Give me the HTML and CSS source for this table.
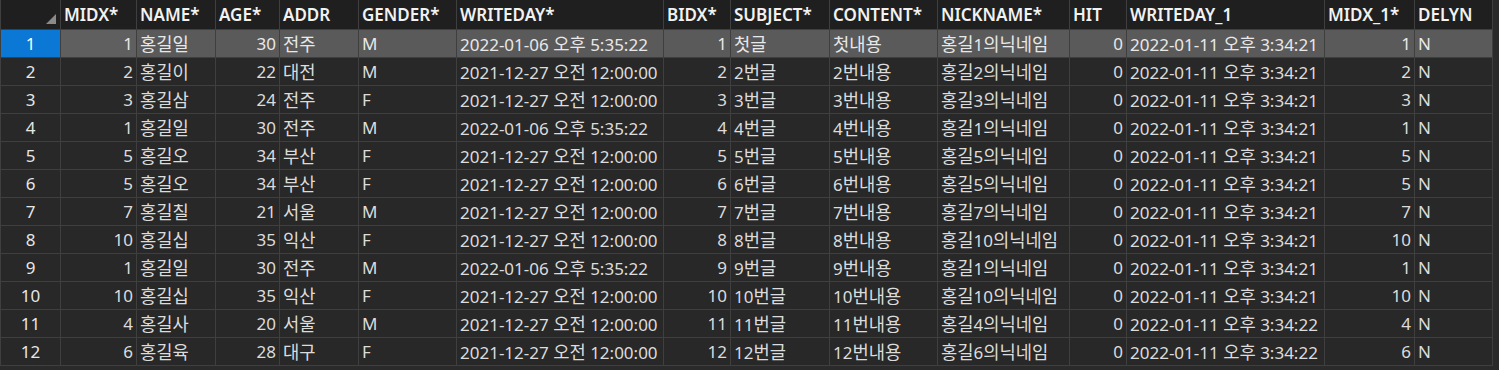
FILE: index.html
```html
<!DOCTYPE html>
<html lang="ko">
<head>
<meta charset="utf-8">
<link rel="stylesheet" href="styles.css">
</head>
<body>
<div class="grid">
  <div class="hd corner"><span class="tri"></span></div>
  <div class="hd">MIDX*</div><div class="hd">NAME*</div><div class="hd">AGE*</div><div class="hd">ADDR</div><div class="hd">GENDER*</div><div class="hd">WRITEDAY*</div><div class="hd">BIDX*</div><div class="hd">SUBJECT*</div><div class="hd">CONTENT*</div><div class="hd">NICKNAME*</div><div class="hd">HIT</div><div class="hd">WRITEDAY_1</div><div class="hd">MIDX_1*</div><div class="hd">DELYN</div>

  <div class="rh cur">1</div><div class="c r sel focus">1</div><div class="c sel"><span class="k">홍길일</span></div><div class="c r sel">30</div><div class="c sel"><span class="k">전주</span></div><div class="c sel">M</div><div class="c sel">2022-01-06 <span class="k">오후</span> 5:35:22</div><div class="c r sel">1</div><div class="c sel"><span class="k">첫글</span></div><div class="c sel"><span class="k">첫내용</span></div><div class="c sel"><span class="k">홍길</span>1<span class="k">의닉네임</span></div><div class="c r sel">0</div><div class="c sel">2022-01-11 <span class="k">오후</span> 3:34:21</div><div class="c r sel">1</div><div class="c sel">N</div>

  <div class="rh">2</div><div class="c r">2</div><div class="c"><span class="k">홍길이</span></div><div class="c r">22</div><div class="c"><span class="k">대전</span></div><div class="c">M</div><div class="c">2021-12-27 <span class="k">오전</span> 12:00:00</div><div class="c r">2</div><div class="c">2<span class="k">번글</span></div><div class="c">2<span class="k">번내용</span></div><div class="c"><span class="k">홍길</span>2<span class="k">의닉네임</span></div><div class="c r">0</div><div class="c">2022-01-11 <span class="k">오후</span> 3:34:21</div><div class="c r">2</div><div class="c">N</div>

  <div class="rh">3</div><div class="c r">3</div><div class="c"><span class="k">홍길삼</span></div><div class="c r">24</div><div class="c"><span class="k">전주</span></div><div class="c">F</div><div class="c">2021-12-27 <span class="k">오전</span> 12:00:00</div><div class="c r">3</div><div class="c">3<span class="k">번글</span></div><div class="c">3<span class="k">번내용</span></div><div class="c"><span class="k">홍길</span>3<span class="k">의닉네임</span></div><div class="c r">0</div><div class="c">2022-01-11 <span class="k">오후</span> 3:34:21</div><div class="c r">3</div><div class="c">N</div>

  <div class="rh">4</div><div class="c r">1</div><div class="c"><span class="k">홍길일</span></div><div class="c r">30</div><div class="c"><span class="k">전주</span></div><div class="c">M</div><div class="c">2022-01-06 <span class="k">오후</span> 5:35:22</div><div class="c r">4</div><div class="c">4<span class="k">번글</span></div><div class="c">4<span class="k">번내용</span></div><div class="c"><span class="k">홍길</span>1<span class="k">의닉네임</span></div><div class="c r">0</div><div class="c">2022-01-11 <span class="k">오후</span> 3:34:21</div><div class="c r">1</div><div class="c">N</div>

  <div class="rh">5</div><div class="c r">5</div><div class="c"><span class="k">홍길오</span></div><div class="c r">34</div><div class="c"><span class="k">부산</span></div><div class="c">F</div><div class="c">2021-12-27 <span class="k">오전</span> 12:00:00</div><div class="c r">5</div><div class="c">5<span class="k">번글</span></div><div class="c">5<span class="k">번내용</span></div><div class="c"><span class="k">홍길</span>5<span class="k">의닉네임</span></div><div class="c r">0</div><div class="c">2022-01-11 <span class="k">오후</span> 3:34:21</div><div class="c r">5</div><div class="c">N</div>

  <div class="rh">6</div><div class="c r">5</div><div class="c"><span class="k">홍길오</span></div><div class="c r">34</div><div class="c"><span class="k">부산</span></div><div class="c">F</div><div class="c">2021-12-27 <span class="k">오전</span> 12:00:00</div><div class="c r">6</div><div class="c">6<span class="k">번글</span></div><div class="c">6<span class="k">번내용</span></div><div class="c"><span class="k">홍길</span>5<span class="k">의닉네임</span></div><div class="c r">0</div><div class="c">2022-01-11 <span class="k">오후</span> 3:34:21</div><div class="c r">5</div><div class="c">N</div>

  <div class="rh">7</div><div class="c r">7</div><div class="c"><span class="k">홍길칠</span></div><div class="c r">21</div><div class="c"><span class="k">서울</span></div><div class="c">M</div><div class="c">2021-12-27 <span class="k">오전</span> 12:00:00</div><div class="c r">7</div><div class="c">7<span class="k">번글</span></div><div class="c">7<span class="k">번내용</span></div><div class="c"><span class="k">홍길</span>7<span class="k">의닉네임</span></div><div class="c r">0</div><div class="c">2022-01-11 <span class="k">오후</span> 3:34:21</div><div class="c r">7</div><div class="c">N</div>

  <div class="rh">8</div><div class="c r">10</div><div class="c"><span class="k">홍길십</span></div><div class="c r">35</div><div class="c"><span class="k">익산</span></div><div class="c">F</div><div class="c">2021-12-27 <span class="k">오전</span> 12:00:00</div><div class="c r">8</div><div class="c">8<span class="k">번글</span></div><div class="c">8<span class="k">번내용</span></div><div class="c"><span class="k">홍길</span>10<span class="k">의닉네임</span></div><div class="c r">0</div><div class="c">2022-01-11 <span class="k">오후</span> 3:34:21</div><div class="c r">10</div><div class="c">N</div>

  <div class="rh">9</div><div class="c r">1</div><div class="c"><span class="k">홍길일</span></div><div class="c r">30</div><div class="c"><span class="k">전주</span></div><div class="c">M</div><div class="c">2022-01-06 <span class="k">오후</span> 5:35:22</div><div class="c r">9</div><div class="c">9<span class="k">번글</span></div><div class="c">9<span class="k">번내용</span></div><div class="c"><span class="k">홍길</span>1<span class="k">의닉네임</span></div><div class="c r">0</div><div class="c">2022-01-11 <span class="k">오후</span> 3:34:21</div><div class="c r">1</div><div class="c">N</div>

  <div class="rh">10</div><div class="c r">10</div><div class="c"><span class="k">홍길십</span></div><div class="c r">35</div><div class="c"><span class="k">익산</span></div><div class="c">F</div><div class="c">2021-12-27 <span class="k">오전</span> 12:00:00</div><div class="c r">10</div><div class="c">10<span class="k">번글</span></div><div class="c">10<span class="k">번내용</span></div><div class="c"><span class="k">홍길</span>10<span class="k">의닉네임</span></div><div class="c r">0</div><div class="c">2022-01-11 <span class="k">오후</span> 3:34:21</div><div class="c r">10</div><div class="c">N</div>

  <div class="rh">11</div><div class="c r">4</div><div class="c"><span class="k">홍길사</span></div><div class="c r">20</div><div class="c"><span class="k">서울</span></div><div class="c">M</div><div class="c">2021-12-27 <span class="k">오전</span> 12:00:00</div><div class="c r">11</div><div class="c">11<span class="k">번글</span></div><div class="c">11<span class="k">번내용</span></div><div class="c"><span class="k">홍길</span>4<span class="k">의닉네임</span></div><div class="c r">0</div><div class="c">2022-01-11 <span class="k">오후</span> 3:34:22</div><div class="c r">4</div><div class="c">N</div>

  <div class="rh">12</div><div class="c r">6</div><div class="c"><span class="k">홍길육</span></div><div class="c r">28</div><div class="c"><span class="k">대구</span></div><div class="c">F</div><div class="c">2021-12-27 <span class="k">오전</span> 12:00:00</div><div class="c r">12</div><div class="c">12<span class="k">번글</span></div><div class="c">12<span class="k">번내용</span></div><div class="c"><span class="k">홍길</span>6<span class="k">의닉네임</span></div><div class="c r">0</div><div class="c">2022-01-11 <span class="k">오후</span> 3:34:22</div><div class="c r">6</div><div class="c">N</div>
</div>
</body>
</html>
```

FILE: styles.css
```css
html, body {
  margin: 0;
  padding: 0;
  background: #2a2a2a;
}
body {
  width: 1499px;
  height: 370px;
  overflow: hidden;
  font-family: "Noto Sans", "Noto Sans CJK KR", sans-serif;
  font-size: 17px;
  color: #dcdcdc;
}
.grid {
  display: grid;
  grid-template-columns: 59px 75px 78px 63px 78px 97px 206px 66px 98px 107px 131px 56px 197px 89px 77px;
  grid-template-rows: 29px repeat(12, 27px);
  gap: 1px;
  width: max-content;
  background: #3f3f3f;
  border-left: 1px solid #3f3f3f;
  border-right: 1px solid #3f3f3f;
  border-bottom: 1px solid #3f3f3f;
}
.grid > div {
  padding: 0 3px;
  white-space: nowrap;
  overflow: hidden;
  line-height: 27px;
}
.hd {
  background: #1f1f1f;
  color: #f2f2f2;
  font-weight: 600;
  font-size: 17px;
}
.grid > .hd {
  line-height: 29px;
}
.k {
  font-family: "Noto Sans CJK KR", sans-serif;
  font-size: 17.7px;
}
.corner {
  position: relative;
}
.tri {
  position: absolute;
  right: 4px;
  bottom: 5px;
  width: 0;
  height: 0;
  border-left: 10px solid transparent;
  border-bottom: 10px solid #8a8a8a;
}
.rh {
  background: #282828;
  text-align: center;
  color: #e6e6e6;
}
.rh.cur {
  background: #0a78d4;
  color: #ffffff;
}
.c {
  background: #282828;
}
.c.r {
  text-align: right;
}
.c.sel {
  background: #5a5a5a;
  color: #e8e8e8;
}
.c.focus {
  background: #5f5f5f;
}
```
